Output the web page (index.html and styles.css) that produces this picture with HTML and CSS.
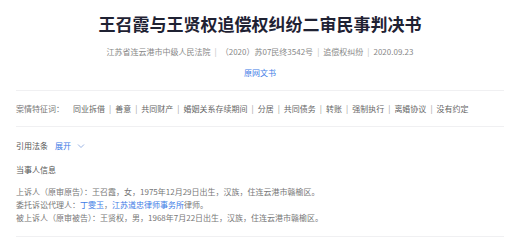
FILE: index.html
```html
<!DOCTYPE html>
<html lang="zh-CN">
<head>
<meta charset="UTF-8">
<meta name="viewport" content="width=device-width, initial-scale=1.0">
<title>王召霞与王贤权追偿权纠纷二审民事判决书</title>
<link rel="stylesheet" href="styles.css">
</head>
<body>
  <div class="doc">
    <div class="doc-head">
      <h1 class="doc-title">王召霞与王贤权追偿权纠纷二审民事判决书</h1>
      <div class="doc-meta">
        <span>江苏省连云港市中级人民法院</span><span class="sep">|</span><span>（2020）苏07民终3542号</span><span class="sep">|</span><span>追偿权纠纷</span><span class="sep">|</span><span>2020.09.23</span>
      </div>
      <a class="doc-source" href="#">原网文书</a>
    </div>

    <div class="keywords">
      <span class="label">案情特征词：</span>
      <span>同业拆借</span><span class="sep">|</span><span>善意</span><span class="sep">|</span><span>共同财产</span><span class="sep">|</span><span>婚姻关系存续期间</span><span class="sep">|</span><span>分居</span><span class="sep">|</span><span>共同债务</span><span class="sep">|</span><span>转账</span><span class="sep">|</span><span>强制执行</span><span class="sep">|</span><span>离婚协议</span><span class="sep">|</span><span>没有约定</span>
    </div>

    <div class="laws">
      <span class="label">引用法条</span>
      <a class="toggle" href="#">展开
        <svg width="8" height="6" viewBox="0 0 8 6"><path d="M1 1.5 L4 4.5 L7 1.5" fill="none" stroke="#8fa9e0" stroke-width="0.9"/></svg>
      </a>
    </div>

    <div class="parties">
      <div class="section-title">当事人信息</div>
      <p>上诉人（原审原告）：王召霞，女，1975年12月29日出生，汉族，住连云港市赣榆区。</p>
      <p>委托诉讼代理人：<a href="#">丁雯玉</a>，<a href="#">江苏道忠律师事务所</a>律师。</p>
      <p>被上诉人（原审被告）：王贤权，男，1968年7月22日出生，汉族，住连云港市赣榆区。</p>
    </div>
  </div>
</body>
</html>
```

FILE: styles.css
```css
body {
  margin: 0;
  background-color: #fff;
  font-family: "Noto Sans CJK SC", "Noto Sans", sans-serif;
  color: #666;
}
a {
  color: #3d7be6;
  text-decoration: none;
}
.doc {
  padding: 0 17px 0 16px;
}
.doc-head {
  display: flex;
  flex-direction: column;
  align-items: center;
  padding-bottom: 10px;
  border-bottom: 1px solid #f0f0f2;
}
.doc-title {
  margin: 12px 0 0;
  font-size: 17px;
  line-height: 24px;
  font-weight: bold;
  color: #1f2233;
}
.doc-meta {
  margin-top: 9px;
  font-size: 8px;
  line-height: 14px;
  color: #888;
}
.doc-meta .sep {
  margin: 0 4px;
  color: #bbb;
}
.doc-source {
  margin-top: 7px;
  font-size: 8px;
  line-height: 14px;
}
.keywords {
  display: flex;
  align-items: center;
  height: 35px;
  font-size: 8px;
  color: #666;
  border-bottom: 1px solid #f0f0f2;
}
.keywords .label {
  margin-right: 9px;
  color: #777;
}
.keywords .sep {
  margin: 0 4px;
  color: #999;
}
.laws {
  display: flex;
  align-items: center;
  margin-top: 12px;
  font-size: 8px;
  line-height: 14px;
}
.laws .label {
  color: #555;
  margin-right: 7px;
}
.toggle {
  display: flex;
  align-items: center;
  gap: 6px;
}
.parties {
  padding-bottom: 12px;
  border-bottom: 1px solid #f0f0f2;
}
.section-title {
  margin-top: 10px;
  font-size: 8px;
  line-height: 14px;
  color: #555;
}
.parties p {
  margin: 0;
  font-size: 8px;
  line-height: 13px;
  color: #777;
}
.parties p:first-of-type {
  margin-top: 8px;
}
```
